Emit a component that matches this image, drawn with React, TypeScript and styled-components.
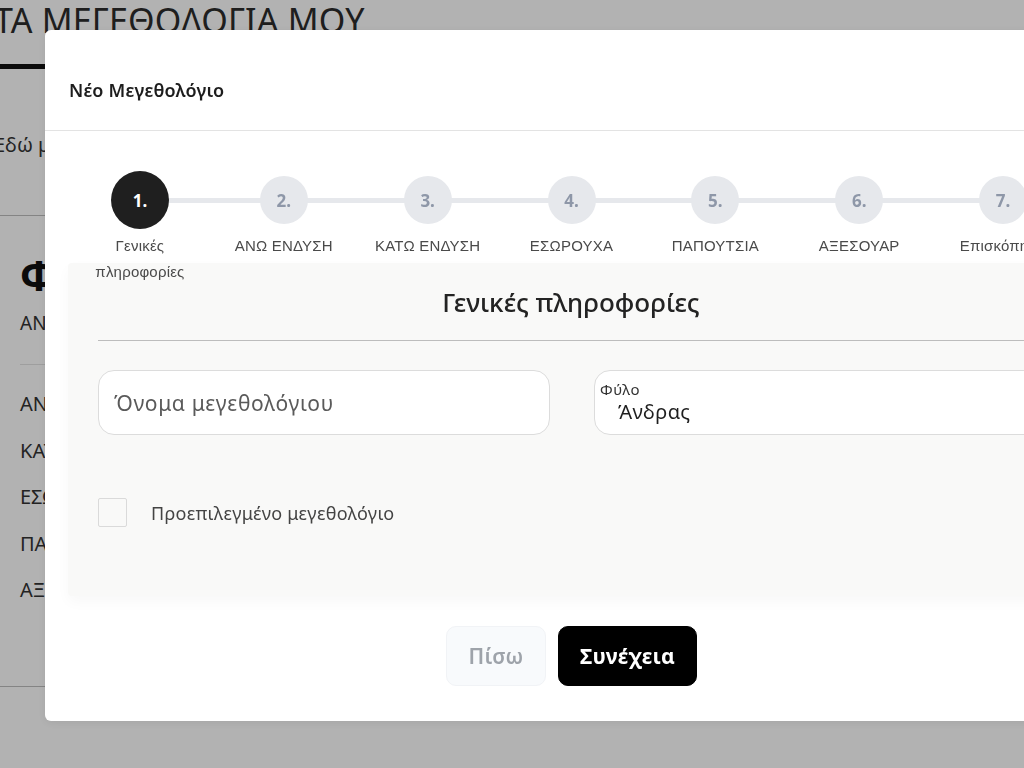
import React from "react";
import styled, { createGlobalStyle } from "styled-components";

const GlobalStyle = createGlobalStyle`
  html, body {
    margin: 0;
    padding: 0;
    width: 1024px;
    height: 768px;
    overflow: hidden;
    background: #ffffff;
    font-family: "Noto Sans", "Liberation Sans", sans-serif;
    color: #222;
  }
  * { box-sizing: border-box; }
`;

/* ---------- background page ---------- */
const Page = styled.div`
  width: 1024px;
  height: 768px;
  margin-left: -6px;
  display: flex;
  flex-direction: column;
  color: #2b2b2b;
`;

const PageTitle = styled.h1`
  margin: 0;
  height: 40px;
  font-size: 34px;
  line-height: 40px;
  font-weight: 400;
  letter-spacing: 0.2px;
  white-space: nowrap;
`;

const TabBar = styled.div`
  margin-top: 24px;
  height: 5px;
  width: 300px;
  background: #111;
`;

const Intro = styled.p`
  margin: 62px 0 0;
  font-size: 20px;
  line-height: 28px;
  color: #333;
  white-space: nowrap;
`;

const Rule = styled.div<{ $inset?: number; $top: number; $shade?: string }>`
  margin-top: ${(p) => p.$top}px;
  margin-left: ${(p) => p.$inset ?? 0}px;
  height: 1px;
  background: ${(p) => p.$shade ?? "#c9c9c9"};
`;

const SectionLetter = styled.div`
  margin: 35px 0 0 26px;
  font-size: 42px;
  line-height: 48px;
  font-weight: 700;
  color: #111;
`;

const SectionSub = styled.div`
  margin: 11px 0 0 26px;
  font-size: 19px;
  line-height: 26px;
  color: #333;
`;

const CatList = styled.div`
  margin: 26px 0 0 26px;
  display: flex;
  flex-direction: column;
  gap: 20.5px;
`;

const CatItem = styled.div`
  font-size: 20px;
  line-height: 26px;
  color: #333;
`;

const Overlay = styled.div`
  position: fixed;
  inset: 0;
  background: rgba(0, 0, 0, 0.3);
`;

/* ---------- modal ---------- */
const Modal = styled.div`
  position: fixed;
  left: 45px;
  top: 30px;
  width: 1054px;
  height: 691px;
  background: #fff;
  border-radius: 6px;
  display: flex;
  flex-direction: column;
  box-shadow: 0 2px 10px rgba(0, 0, 0, 0.08);
`;

const ModalHeader = styled.div`
  height: 101px;
  padding: 47px 0 0 24px;
  border-bottom: 1px solid #e3e3e3;
  font-size: 18px;
  line-height: 26px;
  font-weight: 600;
  letter-spacing: 0.2px;
  color: #1d1d1d;
`;

const ModalBody = styled.div`
  padding: 40px 24px 0 23px;
  display: flex;
  flex-direction: column;
`;

const Stepper = styled.div`
  height: 92px;
  display: flex;
`;

const Step = styled.div<{ $first?: boolean; $last?: boolean }>`
  flex: 1;
  display: flex;
  flex-direction: column;
  align-items: center;
  position: relative;
  &::before {
    content: "";
    position: absolute;
    top: 27px;
    height: 5px;
    left: ${(p) => (p.$first ? "50%" : "0")};
    right: ${(p) => (p.$last ? "50%" : "0")};
    background: #e6e8ec;
  }
`;

const CircleSlot = styled.div`
  height: 58px;
  display: flex;
  align-items: center;
  justify-content: center;
  position: relative;
  z-index: 1;
`;

const Circle = styled.div<{ $active?: boolean }>`
  width: ${(p) => (p.$active ? 58 : 48)}px;
  height: ${(p) => (p.$active ? 58 : 48)}px;
  border-radius: 50%;
  background: ${(p) => (p.$active ? "#1f1f1f" : "#e6e8ec")};
  color: ${(p) => (p.$active ? "#fff" : "#8e97a8")};
  display: flex;
  align-items: center;
  justify-content: center;
  font-family: "Noto Sans", "Liberation Sans", sans-serif;
  font-weight: 700;
  font-size: 17px;
`;

const StepLabel = styled.div`
  margin-top: 4px;
  max-width: 120px;
  text-align: center;
  font-family: "Liberation Sans", Arial, sans-serif;
  font-size: 15px;
  line-height: 26px;
  letter-spacing: 0.2px;
  color: #4a4a4a;
  position: relative;
  z-index: 2;
`;

const Card = styled.div`
  width: 1006px;
  padding: 20px 30px 69px;
  background: #f9f9f8;
  border-radius: 4px;
  box-shadow: 0 6px 14px rgba(0, 0, 0, 0.03);
  display: flex;
  flex-direction: column;
`;

const CardTitle = styled.h2`
  margin: 0;
  text-align: center;
  font-size: 26px;
  line-height: 38px;
  font-weight: 500;
  color: #232323;
`;

const Divider = styled.div`
  margin-top: 19px;
  height: 1px;
  background: #bdbdbd;
`;

const FieldRow = styled.div`
  margin-top: 29px;
  display: grid;
  grid-template-columns: 452px 452px;
  column-gap: 44px;
`;

const TextField = styled.div`
  height: 65px;
  border: 1px solid #dcdcdc;
  border-radius: 16px;
  background: #fff;
  display: flex;
  align-items: center;
  padding-left: 15px;
  font-size: 21px;
  letter-spacing: 0.7px;
  color: #5a5a5a;
`;

const SelectField = styled.div`
  height: 65px;
  border: 1px solid #dcdcdc;
  border-radius: 16px;
  background: #fff;
  display: flex;
  flex-direction: column;
  justify-content: center;
  padding-left: 5px;
`;

const SelectLabel = styled.span`
  font-size: 15px;
  line-height: 19px;
  letter-spacing: 0.6px;
  color: #333;
`;

const SelectValue = styled.span`
  padding-left: 18px;
  font-size: 20px;
  line-height: 26px;
  letter-spacing: 0.4px;
  color: #1f1f1f;
`;

const CheckRow = styled.label`
  margin-top: 63px;
  display: flex;
  align-items: center;
  gap: 24px;
  font-size: 18px;
  letter-spacing: 0.3px;
  color: #444;
`;

const CheckBox = styled.span`
  width: 29px;
  height: 29px;
  border: 1px solid #dadada;
  background: #f9f9f8;
  border-radius: 2px;
`;

const Actions = styled.div`
  margin-top: 30px;
  display: flex;
  justify-content: center;
  gap: 12px;
`;

const Button = styled.button<{ $primary?: boolean }>`
  height: 60px;
  padding: 0 20px;
  min-width: ${(p) => (p.$primary ? 139 : 100)}px;
  border-radius: 10px;
  border: 1px solid ${(p) => (p.$primary ? "#000" : "#f1f3f6")};
  background: ${(p) => (p.$primary ? "#000" : "#f8fafc")};
  color: ${(p) => (p.$primary ? "#fff" : "#9ea3aa")};
  font-family: "Noto Sans", "Liberation Sans", sans-serif;
  font-size: 21px;
  letter-spacing: 0.3px;
  font-weight: ${(p) => (p.$primary ? 700 : 600)};
  cursor: pointer;
`;

const steps = [
  "Γενικές πληροφορίες",
  "ΑΝΩ ΕΝΔΥΣΗ",
  "ΚΑΤΩ ΕΝΔΥΣΗ",
  "ΕΣΩΡΟΥΧΑ",
  "ΠΑΠΟΥΤΣΙΑ",
  "ΑΞΕΣΟΥΑΡ",
  "Επισκόπηση",
];

const categories = ["ΑΝΩ ΕΝΔΥΣΗ", "ΚΑΤΩ ΕΝΔΥΣΗ", "ΕΣΩΡΟΥΧΑ", "ΠΑΠΟΥΤΣΙΑ", "ΑΞΕΣΟΥΑΡ"];

export default function App() {
  return (
    <>
      <GlobalStyle />
      <Page>
        <PageTitle>ΤΑ ΜΕΓΕΘΟΛΟΓΙΑ ΜΟΥ</PageTitle>
        <TabBar />
        <Intro>Εδώ μπορείτε να διαχειριστείτε τα μεγεθολόγιά σας</Intro>
        <Rule $top={56} $shade="#bdbdbd" />
        <SectionLetter>Φ</SectionLetter>
        <SectionSub>ΑΝΔΡΑΣ</SectionSub>
        <Rule $top={28} $inset={26} $shade="#e2e2e2" />
        <CatList>
          {categories.map((c) => (
            <CatItem key={c}>{c}</CatItem>
          ))}
        </CatList>
        <Rule $top={83} $shade="#bdbdbd" />
      </Page>
      <Overlay />
      <Modal>
        <ModalHeader>Νέο Μεγεθολόγιο</ModalHeader>
        <ModalBody>
          <Stepper>
            {steps.map((s, i) => (
              <Step key={s} $first={i === 0} $last={i === steps.length - 1}>
                <CircleSlot>
                  <Circle $active={i === 0}>{i + 1}.</Circle>
                </CircleSlot>
                <StepLabel>{s}</StepLabel>
              </Step>
            ))}
          </Stepper>
          <Card>
            <CardTitle>Γενικές πληροφορίες</CardTitle>
            <Divider />
            <FieldRow>
              <TextField>Όνομα μεγεθολόγιου</TextField>
              <SelectField>
                <SelectLabel>Φύλο</SelectLabel>
                <SelectValue>Άνδρας</SelectValue>
              </SelectField>
            </FieldRow>
            <CheckRow>
              <CheckBox />
              Προεπιλεγμένο μεγεθολόγιο
            </CheckRow>
          </Card>
          <Actions>
            <Button>Πίσω</Button>
            <Button $primary>Συνέχεια</Button>
          </Actions>
        </ModalBody>
      </Modal>
    </>
  );
}
